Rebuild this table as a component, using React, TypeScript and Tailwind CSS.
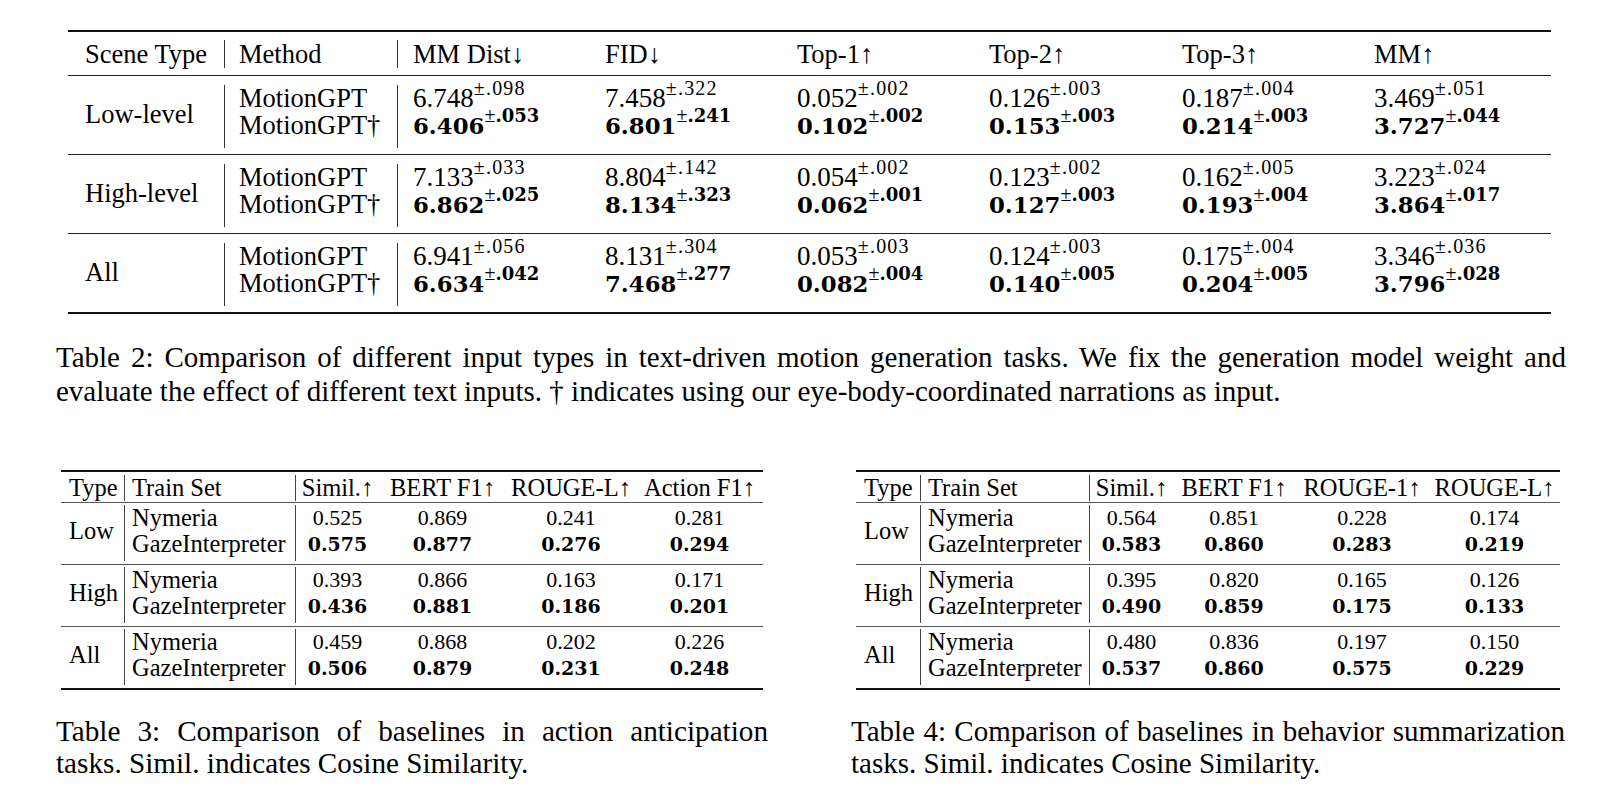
import React from "react";

const serif = "font-['Liberation_Serif','Times_New_Roman',serif]";
const boldNum = "font-['DejaVu_Serif',serif] font-bold";

type Pair = [string, string];

const t2Rows: { scene: string; base: Pair[]; ours: Pair[] }[] = [
  {
    scene: "Low-level",
    base: [["6.748", ".098"], ["7.458", ".322"], ["0.052", ".002"], ["0.126", ".003"], ["0.187", ".004"], ["3.469", ".051"]],
    ours: [["6.406", ".053"], ["6.801", ".241"], ["0.102", ".002"], ["0.153", ".003"], ["0.214", ".003"], ["3.727", ".044"]],
  },
  {
    scene: "High-level",
    base: [["7.133", ".033"], ["8.804", ".142"], ["0.054", ".002"], ["0.123", ".002"], ["0.162", ".005"], ["3.223", ".024"]],
    ours: [["6.862", ".025"], ["8.134", ".323"], ["0.062", ".001"], ["0.127", ".003"], ["0.193", ".004"], ["3.864", ".017"]],
  },
  {
    scene: "All",
    base: [["6.941", ".056"], ["8.131", ".304"], ["0.053", ".003"], ["0.124", ".003"], ["0.175", ".004"], ["3.346", ".036"]],
    ours: [["6.634", ".042"], ["7.468", ".277"], ["0.082", ".004"], ["0.140", ".005"], ["0.204", ".005"], ["3.796", ".028"]],
  },
];

type Group = { type: string; base: string[]; ours: string[] };

const t3Rows: Group[] = [
  { type: "Low", base: ["0.525", "0.869", "0.241", "0.281"], ours: ["0.575", "0.877", "0.276", "0.294"] },
  { type: "High", base: ["0.393", "0.866", "0.163", "0.171"], ours: ["0.436", "0.881", "0.186", "0.201"] },
  { type: "All", base: ["0.459", "0.868", "0.202", "0.226"], ours: ["0.506", "0.879", "0.231", "0.248"] },
];

const t4Rows: Group[] = [
  { type: "Low", base: ["0.564", "0.851", "0.228", "0.174"], ours: ["0.583", "0.860", "0.283", "0.219"] },
  { type: "High", base: ["0.395", "0.820", "0.165", "0.126"], ours: ["0.490", "0.859", "0.175", "0.133"] },
  { type: "All", base: ["0.480", "0.836", "0.197", "0.150"], ours: ["0.537", "0.860", "0.575", "0.229"] },
];

function Stat({ v, pm, bold }: { v: string; pm: string; bold?: boolean }) {
  if (bold) {
    return (
      <span className="whitespace-nowrap">
        <span className={`${boldNum} text-[22.8px]`}>{v}</span>
        <sup className="-top-[12px] text-[20px]">
          ±<span className={`${boldNum} text-[18px]`}>{pm}</span>
        </sup>
      </span>
    );
  }
  return (
    <span className="whitespace-nowrap">
      <span className="text-[27px]">{v}</span>
      <sup className="-top-[12px] text-[20px] tracking-[0.06em]">±{pm}</sup>
    </span>
  );
}

function Table2() {
  const cols = "grid grid-cols-[156px_173px_208px_192px_192px_193px_192px_177px]";
  const heads = ["FID↓", "Top-1↑", "Top-2↑", "Top-3↑", "MM↑"];
  return (
    <div className="ml-[12px] w-[1483px] border-y-2 border-[#111] text-[26.5px]">
      {/* header */}
      <div className={`${cols} pt-[8px] pb-[7px]`}>
        <div className="pl-[17px] leading-[28px]">Scene Type</div>
        <div className="border-l border-[#333] pl-[14px] leading-[28px]">Method</div>
        <div className="border-l border-[#333] pl-[15px] leading-[28px]">MM Dist↓</div>
        {heads.map((h) => (
          <div key={h} className="leading-[28px]">
            {h}
          </div>
        ))}
      </div>
      {t2Rows.map((r) => (
        <div key={r.scene} className={`${cols} border-t border-[#222] pt-[9px] pb-[6px]`}>
          <div className="flex h-[54px] items-center pt-[6px] pl-[17px]">{r.scene}</div>
          <div className="border-l border-[#333] pb-[9px] pl-[14px]">
            <div className="h-[27px] leading-[27px]">MotionGPT</div>
            <div className="h-[27px] leading-[27px]">MotionGPT†</div>
          </div>
          {r.base.map((b, i) => (
            <div key={i} className={i === 0 ? "border-l border-[#333] pb-[9px] pl-[15px]" : "pb-[9px]"}>
              <div className="h-[27px] leading-[27px]">
                <Stat v={b[0]} pm={b[1]} />
              </div>
              <div className="h-[27px] leading-[27px]">
                <Stat v={r.ours[i][0]} pm={r.ours[i][1]} bold />
              </div>
            </div>
          ))}
        </div>
      ))}
    </div>
  );
}

function SmallTable({ cols, width, heads, rows }: { cols: string; width: string; heads: string[]; rows: Group[] }) {
  return (
    <div className={`mx-auto ${width} border-y-2 border-[#111] text-[24.5px]`}>
      <div className={`${cols} pt-[3px] pb-[1px]`}>
        <div className="pl-[8px] leading-[26px]">Type</div>
        <div className="border-l border-[#444] pl-[7px] leading-[26px]">Train Set</div>
        {heads.map((h, i) => (
          <div key={h} className={i === 0 ? "border-l border-[#444] text-center leading-[26px]" : "text-center leading-[26px]"}>
            {h}
          </div>
        ))}
      </div>
      {rows.map((g) => (
        <div key={g.type} className={`${cols} border-t border-[#555] pt-[2px] pb-[3px]`}>
          <div className="flex h-[52px] items-center pl-[8px]">{g.type}</div>
          <div className="border-l border-[#444] pb-[4px] pl-[7px]">
            <div className="h-[26px] leading-[26px]">Nymeria</div>
            <div className="h-[26px] leading-[26px]">GazeInterpreter</div>
          </div>
          {g.base.map((b, i) => (
            <div key={i} className={i === 0 ? "border-l border-[#444] pb-[4px] text-center" : "pb-[4px] text-center"}>
              <div className="h-[26px] text-[22px] leading-[26px]">{b}</div>
              <div className={`h-[26px] text-[19px] leading-[26px] ${boldNum}`}>{g.ours[i]}</div>
            </div>
          ))}
        </div>
      ))}
    </div>
  );
}

export default function App() {
  return (
    <div className={`h-[810px] w-[1624px] overflow-hidden bg-white pl-[56px] pt-[30px] text-black ${serif}`}>
      <Table2 />
      <p className="mt-[26px] w-[1510px] text-justify text-[29px] leading-[34px]">
        Table 2: Comparison of different input types in text-driven motion generation tasks. We fix the generation model weight and
        evaluate the effect of different text inputs. † indicates using our eye-body-coordinated narrations as input.
      </p>

      <div className="mt-[62px] flex gap-[83px]">
        <div className="w-[712px]">
          <SmallTable
            cols="grid grid-cols-[63px_171px_84px_127px_130px_127px]"
            width="w-[702px]"
            heads={["Simil.↑", "BERT F1↑", "ROUGE-L↑", "Action F1↑"]}
            rows={t3Rows}
          />
          <p className="mt-[25px] text-justify text-[29.2px] leading-[32px]">
            Table 3: Comparison of baselines in action anticipation tasks. Simil. indicates Cosine Similarity.
          </p>
        </div>
        <div className="w-[714px]">
          <SmallTable
            cols="grid grid-cols-[64px_169px_84px_122px_134px_131px]"
            width="w-[704px]"
            heads={["Simil.↑", "BERT F1↑", "ROUGE-1↑", "ROUGE-L↑"]}
            rows={t4Rows}
          />
          <p className="mt-[25px] text-justify text-[29px] leading-[32px]">
            Table 4: Comparison of baselines in behavior summarization tasks. Simil. indicates Cosine Similarity.
          </p>
        </div>
      </div>
    </div>
  );
}
